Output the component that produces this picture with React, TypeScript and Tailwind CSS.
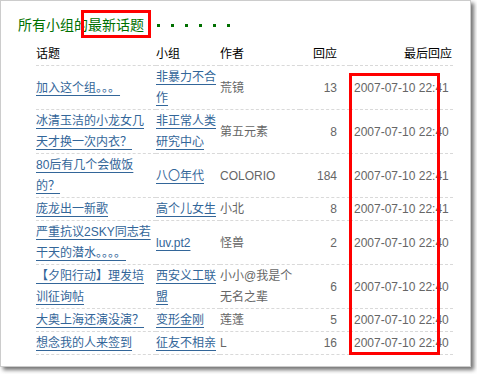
import React from 'react';

interface Topic {
  title: string;
  group: string;
  author: string;
  replies: number;
  last: string;
}

const topics: Topic[] = [
  { title: '加入这个组。。。', group: '非暴力不合作', author: '荒镜', replies: 13, last: '2007-07-10 22:41' },
  { title: '冰清玉洁的小龙女几天才换一次内衣？', group: '非正常人类研究中心', author: '第五元素', replies: 8, last: '2007-07-10 22:40' },
  { title: '80后有几个会做饭的？', group: '八〇年代', author: 'COLORIO', replies: 184, last: '2007-07-10 22:41' },
  { title: '庞龙出一新歌', group: '高个儿女生', author: '小北', replies: 8, last: '2007-07-10 22:41' },
  { title: '严重抗议2SKY同志若干天的潜水。。。。', group: 'luv.pt2', author: '怪兽', replies: 2, last: '2007-07-10 22:40' },
  { title: '【夕阳行动】理发培训征询帖', group: '西安义工联盟', author: '小小@我是个无名之辈', replies: 6, last: '2007-07-10 22:40' },
  { title: '大奥上海还演没演？', group: '变形金刚', author: '莲蓬', replies: 5, last: '2007-07-10 22:40' },
  { title: '想念我的人来签到', group: '征友不相亲', author: 'L', replies: 16, last: '2007-07-10 22:40' },
];

const cell = 'p-0 pt-[1px] align-middle border-b border-dashed border-[#d9d9d9]';
const link = 'text-[#336699] underline underline-offset-[3px]';

export default function App() {
  return (
    <div
      className="w-[477px] h-[374px] bg-white overflow-hidden"
      style={{ fontFamily: '"Liberation Sans", "Noto Sans CJK SC", sans-serif' }}
    >
      <div className="relative w-[471px] h-[367px] bg-white border border-[#cccccc] shadow-[3px_3px_4px_rgba(0,0,0,0.55)] pt-[14px] pl-[17px]">
        {/* title */}
        <div className="flex items-center h-[20px]">
          <span className="text-[14px] leading-[20px] text-[#007000]">所有小组的最新话题</span>
          <div className="flex gap-[11px] ml-[13px] mt-[1px]">
            {Array.from({ length: 6 }).map((_, i) => (
              <span key={i} className="w-[3px] h-[3px] bg-[#007000]" />
            ))}
          </div>
        </div>

        <table className="mt-[8px] ml-[18px] w-[417px] table-fixed border-collapse text-[12px] leading-[21px]">
          <colgroup>
            <col className="w-[120px]" />
            <col className="w-[64px]" />
            <col className="w-[80px]" />
            <col className="w-[50px]" />
            <col className="w-[103px]" />
          </colgroup>
          <thead>
            <tr className="text-black">
              <th className={`${cell} text-left font-normal`}>话题</th>
              <th className={`${cell} text-left font-normal`}>小组</th>
              <th className={`${cell} text-left font-normal`}>作者</th>
              <th className={`${cell} text-right font-normal pr-[13px]`}>回应</th>
              <th className={`${cell} text-right font-normal pr-[1px]`}>最后回应</th>
            </tr>
          </thead>
          <tbody>
            {topics.map((t, i) => (
              <tr key={i}>
                <td className={`${cell} pr-[4px]`}>
                  <a className={link}>{t.title}</a>
                </td>
                <td className={`${cell} pr-[2px]`}>
                  <a className={link}>{t.group}</a>
                </td>
                <td className={`${cell} pr-[2px] text-[#666666]`}>{t.author}</td>
                <td className={`${cell} pr-[13px] text-right text-[#666666]`}>{t.replies}</td>
                <td className={`${cell} pl-[4px] text-[#666666] whitespace-nowrap`}>{t.last}</td>
              </tr>
            ))}
          </tbody>
        </table>

        {/* red annotation boxes */}
        <div className="absolute left-[80px] top-[9px] w-[70px] h-[28px] border-[3px] border-[#ff0000]" />
        <div className="absolute left-[348px] top-[72px] w-[91px] h-[282px] border-[3px] border-[#ff0000]" />
      </div>
    </div>
  );
}
